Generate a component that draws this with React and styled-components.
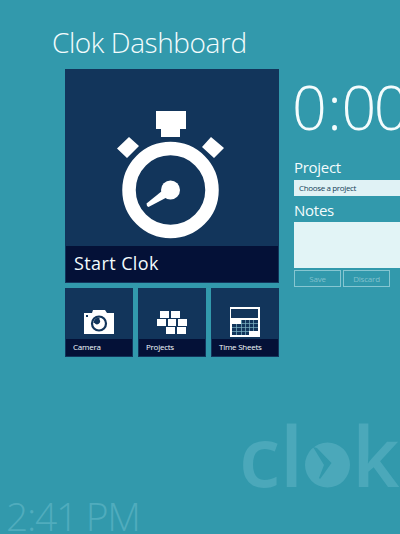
import React from "react";
import styled, { createGlobalStyle } from "styled-components";

const GlobalStyle = createGlobalStyle`
  * { box-sizing: border-box; }
  body { margin: 0; background: #3299ac; overflow: hidden; }
`;

const Page = styled.div`
  width: 400px;
  height: 534px;
  overflow: hidden;
  display: flex;
  flex-direction: column;
  background: #3299ac;
  color: #f4fcfd;
  font-family: "Open Sans", "Noto Sans", sans-serif;
  white-space: nowrap;
`;

const Title = styled.h1`
  margin: 0;
  height: 69px;
  padding: 22px 0 0 52px;
  font-size: 28px;
  line-height: 40px;
  font-weight: 300;
  letter-spacing: -0.42px;
`;

const Main = styled.main`
  display: flex;
  gap: 15px;
  padding-left: 65px;
  height: 288px;
`;

const Tiles = styled.section`
  flex: none;
  width: 214px;
  display: grid;
  grid-template-columns: repeat(3, 68px);
  grid-template-rows: 214px 69px;
  gap: 5px;
`;

const Tile = styled.div`
  grid-column: ${(p) => (p.$large ? "1 / -1" : "auto")};
  display: flex;
  flex-direction: column;
  background: #12355b;
  border: 1px solid #12355b;
`;

const TileArt = styled.div`
  flex: 1;
  min-height: 0;
  svg { display: block; }
`;

const TileLabel = styled.div`
  height: ${(p) => (p.$large ? "36px" : "17px")};
  padding-left: ${(p) => (p.$large ? "8px" : "7px")};
  background: #041137;
  font-size: ${(p) => (p.$large ? "18px" : "8px")};
  line-height: ${(p) => (p.$large ? "35px" : "16px")};
  letter-spacing: ${(p) => (p.$large ? "0.4px" : "-0.25px")};
`;

const Form = styled.section`
  flex: none;
  width: 180px;
  display: flex;
  flex-direction: column;
`;

const Elapsed = styled.div`
  display: flex;
  height: 88px;
  margin-left: -2px;
  font-size: 61px;
  line-height: 76px;
  font-weight: 300;
  letter-spacing: -2.5px;
`;

const Colon = styled.span`
  padding: 0 2px 0 3px;
`;

const FieldLabel = styled.label`
  height: ${(p) => p.$height}px;
  padding-top: ${(p) => p.$top || 0}px;
  font-size: 15px;
  line-height: 20px;
  letter-spacing: ${(p) => p.$tracking || 0}px;
`;

const Select = styled.div`
  height: 16px;
  padding-left: 5px;
  background: #e0f2f5;
  color: #153f59;
  font-size: 8px;
  line-height: 16px;
  letter-spacing: -0.35px;
`;

const Notes = styled.div`
  height: 46px;
  background: #e2f4f6;
`;

const Buttons = styled.div`
  display: flex;
  gap: 2px;
  margin-top: 2px;
`;

const Button = styled.button`
  width: 47px;
  height: 17px;
  padding: 0;
  border: 1px solid #86c6d1;
  background: transparent;
  color: #80c1cc;
  font: 8px/14px "Open Sans", sans-serif;
  letter-spacing: -0.2px;
`;

const Brand = styled.div`
  display: flex;
  height: 141px;
  padding: 56px 0 0 239px;
  color: #4ba8ba;
  font-size: 83px;
  line-height: 83px;
  font-weight: 600;
`;

const Letter = styled.span`
  flex: none;
  width: ${(p) => p.$width}px;
`;

const BrandClock = styled.svg`
  flex: none;
  width: 45px;
  height: 46px;
  margin: 29px 2px 0 0;
`;

const Clock = styled.footer`
  height: 36px;
  padding-left: 6px;
  color: #50acbd;
  font-size: 39px;
  line-height: 36px;
  font-weight: 300;
  letter-spacing: -1.3px;
`;

const Stopwatch = () => (
  <svg width="212" height="176" viewBox="66 70 212 176" fill="#fff">
    <path d="M156 111h30v18h-6v8h-19v-8h-5zM129 137l10 9-12 12-10-9.500zM211 137l13 11-10 10-12-11z" />
    <circle cx="170.500" cy="190" r="41.500" fill="none" stroke="#fff" strokeWidth="13.500" />
    <circle cx="170.500" cy="190" r="9.500" />
    <path d="M162 191l-15.500 12.500q0 3 2 3.500l19-10z" />
  </svg>
);

const Camera = () => (
  <svg width="66" height="50" viewBox="66 289 66 50">
    <path fill="#fff" d="M84 313h8l1-3h12l2 3h7v21H84z" />
    <circle cx="99" cy="323.500" r="7" fill="#fff" stroke="#12355b" strokeWidth="2.200" />
    <path fill="#12355b" d="M93.500 323a5.500 5.500 0 0 1 6-5.500v2a3 3 0 0 1-5 3.500zM86 315h2v2h-2z" />
  </svg>
);

const Bricks = () => (
  <svg width="66" height="50" viewBox="139 289 66 50" fill="#fff">
    <path d="M160 311h9v7h-9zM171 311h9v7h-9zM157 319h9v7h-9zM168 319h8v7h-8zM178 319h9v7h-9zM166 327h9v7h-9zM177 327h9v7h-9z" />
  </svg>
);

const Sheet = () => (
  <svg width="66" height="50" viewBox="212 289 66 50">
    <path fill="#fff" d="M230 307h30v30h-30z" />
    <path fill="#12355b" d="M231 309h27v9h-27zM241 320h17v11h-17zM232 324h17v11h-17z" />
    <path
      fill="none"
      stroke="#80b5c5"
      strokeWidth="0.700"
      d="M236.500 324v11M241.500 320v15M245.500 320v15M249.500 320v11M253.500 320v11M241 323.500h17M232 327.500h26M232 331.500h17"
    />
  </svg>
);

const smallTiles = [
  { label: "Camera", Icon: Camera },
  { label: "Projects", Icon: Bricks },
  { label: "Time Sheets", Icon: Sheet },
];

export default function App() {
  return (
    <Page>
      <GlobalStyle />
      <Title>Clok Dashboard</Title>
      <Main>
        <Tiles>
          <Tile $large>
            <TileArt><Stopwatch /></TileArt>
            <TileLabel $large>Start Clok</TileLabel>
          </Tile>
          {smallTiles.map(({ label, Icon }) => (
            <Tile key={label}>
              <TileArt><Icon /></TileArt>
              <TileLabel>{label}</TileLabel>
            </Tile>
          ))}
        </Tiles>
        <Form>
          <Elapsed>0<Colon>:</Colon>00</Elapsed>
          <FieldLabel $height={23} $tracking={-0.3}>Project</FieldLabel>
          <Select>Choose a project</Select>
          <FieldLabel $height={26} $top={4} $tracking={-0.25}>Notes</FieldLabel>
          <Notes />
          <Buttons>
            <Button>Save</Button>
            <Button>Discard</Button>
          </Buttons>
        </Form>
      </Main>
      <Brand>
        <Letter $width={41}>c</Letter>
        <Letter $width={25}>l</Letter>
        <BrandClock viewBox="305 443 45 46">
          <circle cx="327.500" cy="466" r="22.500" fill="#4ba8ba" />
          <path d="M313 448l4 1 14.500 15-8.500 12-3 4-1-1 5-13z" fill="#3299ac" />
        </BrandClock>
        <Letter $width={48}>k</Letter>
      </Brand>
      <Clock>2:41 PM</Clock>
    </Page>
  );
}
